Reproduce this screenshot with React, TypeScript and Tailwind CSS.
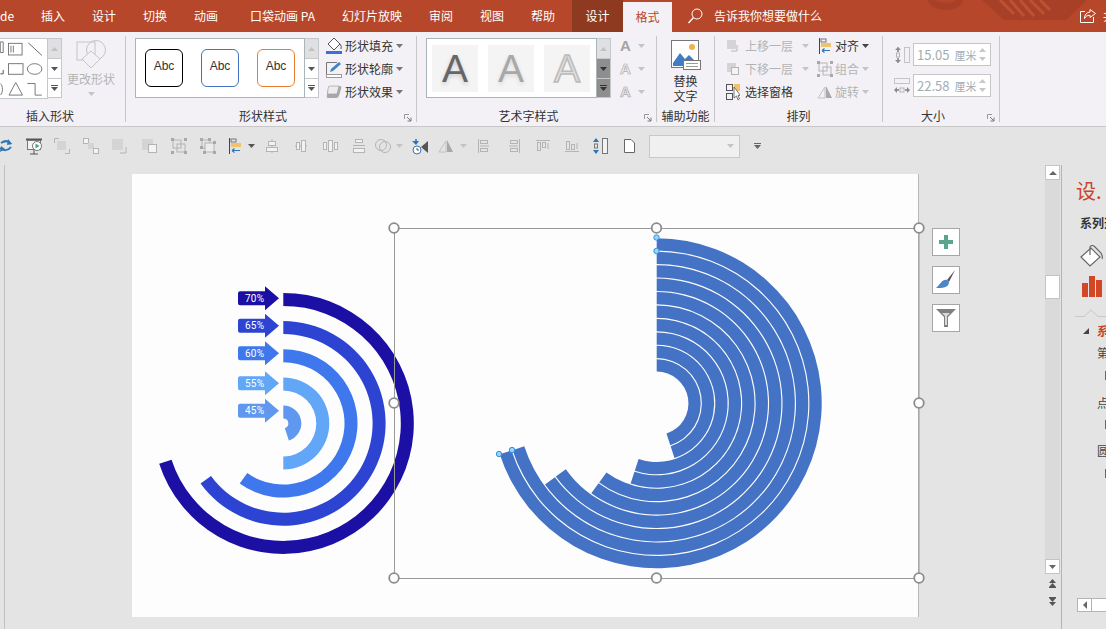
import React from 'react';

const TABS = ['插入', '设计', '切换', '动画', '口袋动画 PA', '幻灯片放映', '审阅', '视图', '帮助'];

const pt = (cx: number, cy: number, r: number, deg: number) => {
  const a = (deg * Math.PI) / 180;
  return `${(cx + r * Math.sin(a)).toFixed(2)} ${(cy - r * Math.cos(a)).toFixed(2)}`;
};

// ring segment running clockwise from 12 o'clock
const ring = (cx: number, cy: number, ro: number, ri: number, deg: number) => {
  const large = deg > 180 ? 1 : 0;
  return `M${pt(cx, cy, ro, 0)} A${ro} ${ro} 0 ${large} 1 ${pt(cx, cy, ro, deg)} L${pt(cx, cy, ri, deg)} A${ri} ${ri} 0 ${large} 0 ${pt(cx, cy, ri, 0)} Z`;
};

const LEFT_RINGS = [
  { ro: 130.5, ri: 117.5, deg: 252, color: '#1c10a4' },
  { ro: 102.3, ri: 89.3, deg: 234, color: '#2d44d2' },
  { ro: 74.2, ri: 61.2, deg: 216, color: '#3e78ec' },
  { ro: 46, ri: 33, deg: 180, color: '#62a6f8' },
  { ro: 18, ri: 5, deg: 162, color: '#5f98ee' },
];

const LABELS = [
  { y: 298.3, text: '70%', color: '#1c10a4' },
  { y: 325.7, text: '65%', color: '#2d44d2' },
  { y: 353.3, text: '60%', color: '#3e78ec' },
  { y: 383.3, text: '55%', color: '#62a6f8' },
  { y: 410.7, text: '45%', color: '#5f98ee' },
];

const RIGHT_DEGS = [252, 252, 234, 234, 216, 216, 198, 198, 162, 162];

const HANDLES = [
  [394, 228], [656.5, 228], [919, 228],
  [394, 403], [919, 403],
  [394, 578], [656.5, 578], [919, 578],
];

const Caret = ({ className = 'text-[#666]' }: { className?: string }) => (
  <svg width="7" height="4" viewBox="0 0 7 4" className={`shrink-0 ${className}`}>
    <path d="M0 0H7L3.5 4Z" fill="currentColor" />
  </svg>
);

const GalleryScroll = ({ dark = false }: { dark?: boolean }) => (
  <div className="flex w-[14px] shrink-0 flex-col">
    <div className={`flex h-[21px] items-center justify-center border border-l-0 border-[#c4c8ca] bg-[#e0dfe2]`}>
      <svg width="7" height="4" viewBox="0 0 7 4"><path d="M0 4H7L3.5 0Z" fill="#c2c2c2" /></svg>
    </div>
    <div className={`flex h-[19px] items-center justify-center border-r border-[#c4c8ca] ${dark ? 'bg-[#8e8e8e]' : 'bg-white'}`}>
      <Caret className={dark ? 'text-[#333]' : 'text-[#555]'} />
    </div>
    <div className={`flex h-[20px] flex-col items-center justify-center gap-[1px] border border-l-0 border-[#c4c8ca] ${dark ? 'bg-[#8e8e8e]' : 'bg-white'}`}>
      <div className={`h-px w-[7px] ${dark ? 'bg-[#333]' : 'bg-[#555]'}`} />
      <Caret className={dark ? 'text-[#333]' : 'text-[#555]'} />
    </div>
  </div>
);

const AbcBox = ({ className }: { className: string }) => (
  <div className={`flex h-[38px] w-[38px] items-center justify-center rounded-[6px] border bg-white pb-[4px] font-['Liberation_Sans',sans-serif] text-xs text-[#333] ${className}`}>
    Abc
  </div>
);

const Launcher = () => (
  <svg width="8" height="8" viewBox="0 0 8 8" className="absolute right-[4px] bottom-0">
    <path d="M0.5 5V0.5H5" fill="none" stroke="#999" />
    <path d="M3 3L7 7M7 3.5V7H3.5" fill="none" stroke="#777" />
  </svg>
);

const Group = ({ label, labelClass = '', launcher = false, className = '', children }: { label: string; labelClass?: string; launcher?: boolean; className?: string; children: React.ReactNode }) => (
  <div className={`flex h-[86px] shrink-0 flex-col border-r border-[#c6c6c6] ${className}`}>
    <div className="flex h-[70px]">{children}</div>
    <div className={`relative h-[16px] text-center text-xs leading-[20px] text-[#333] ${labelClass}`}>
      {label}
      {launcher && <Launcher />}
    </div>
  </div>
);

const GrayBox = ({ x, y, s = 8 }: { x: number; y: number; s?: number }) => <rect x={x} y={y} width={s} height={s} fill="#d4d4d4" />;

const Outline = ({ x, y, s = 8, c = '#b4b4b4' }: { x: number; y: number; s?: number; c?: string }) => (
  <rect x={x + 0.5} y={y + 0.5} width={s - 1} height={s - 1} fill="#f4f4f4" stroke={c} />
);

const Icon = ({ w = 16, h = 16, children }: { w?: number; h?: number; children: React.ReactNode }) => (
  <svg width={w} height={h} viewBox={`0 0 ${w} ${h}`} className="shrink-0">{children}</svg>
);

const AlignIcon = () => (
  <Icon w={12} h={16}>
    <path d="M0.5 0V16" stroke="#444" />
    <rect x="2" y="1" width="5" height="3" fill="none" stroke="#777" />
    <rect x="2" y="5" width="10" height="4" fill="#efc26b" />
    <path d="M3 12.5H11M3 12.5L5.5 10.5M3 12.5L5.5 14.5" fill="none" stroke="#2e75b6" strokeWidth="1.2" />
  </Icon>
);

const GroupIcon = () => (
  <Icon>
    <rect x="2" y="2" width="8" height="8" fill="none" stroke="#b4b4b4" />
    <rect x="6" y="6" width="8" height="8" fill="none" stroke="#b4b4b4" />
    {[[0, 0], [13, 0], [0, 13], [13, 13]].map(([x, y]) => <rect key={`${x}${y}`} x={x} y={y} width="3" height="3" fill="#a8a8a8" />)}
  </Icon>
);

const RotateIcon = () => (
  <Icon>
    <path d="M8 3V14H1Z" fill="none" stroke="#c0c0c0" />
    <path d="M9 2L15 14H9Z" fill="#a8a8a8" />
  </Icon>
);

const ToolSlot = ({ className, children }: { className: string; children: React.ReactNode }) => (
  <div className={`flex shrink-0 items-center justify-center ${className}`}>{children}</div>
);

const Spin = () => (
  <div className="flex flex-col gap-[5px]">
    <svg width="7" height="4" viewBox="0 0 7 4"><path d="M0 4H7L3.5 0Z" fill="#c8c8c8" /></svg>
    <Caret className="text-[#c8c8c8]" />
  </div>
);

const SizeInput = ({ value }: { value: string }) => (
  <div className="ml-[3px] flex h-[23px] w-[78px] items-center justify-between border border-[#c6c6c6] bg-white pr-[4px] pl-[3px] text-[#a3acb5]">
    <span className="text-[13px] whitespace-nowrap">{value}<span className="ml-[5px] text-[11px]">厘米</span></span>
    <Spin />
  </div>
);

const ChartButton = ({ children }: { children: React.ReactNode }) => (
  <div className="flex h-[28px] w-[28px] items-center justify-center border border-[#a6a6a6] bg-white">{children}</div>
);

export default function App() {
  return (
    <div className="flex h-[629px] w-[1106px] flex-col overflow-hidden bg-[#e4e4e4] font-['Noto_Sans_CJK_SC',sans-serif]">
      {/* title bar / tabs */}
      <div className="relative flex h-[32px] shrink-0 items-end overflow-hidden bg-[#b7472a] text-xs text-white">
        <svg width="1106" height="32" className="absolute top-0 left-0">
          <path d="M928 0A17.5 10 0 0 0 963 0H955A10 4 0 0 1 936 0Z" fill="#a84027" />
          <path d="M982 0L1004 20H1066L1087 0Z" fill="#a84027" />
          <path d="M1000 0L1014 14M1010 0L1024 16M1020 0L1034 16M1030 0L1044 14M1040 0L1050 10" stroke="#bd5233" strokeWidth="3" />
        </svg>
        <div className="relative flex h-[32px] w-[27.5px] shrink-0 items-center">de</div>
        {TABS.map((tab) => (
          <div key={tab} className={`relative flex h-[32px] shrink-0 items-center pr-[13.5px] whitespace-nowrap ${tab === '口袋动画 PA' ? 'pl-[18.5px]' : 'pl-[13.5px]'}`}>{tab}</div>
        ))}
        <div className="relative ml-[3.5px] flex h-[32px] w-[51px] shrink-0 items-center justify-center bg-[#8e3a21]">设计</div>
        <div className="relative flex h-[30px] w-[49px] shrink-0 items-center justify-center bg-[#f3f1f5] text-[#b7472a]">格式</div>
        <div className="relative flex h-[32px] shrink-0 items-center">
          <svg width="15" height="16" viewBox="0 0 15 16" className="ml-[16px]">
            <circle cx="9" cy="6" r="5" fill="none" stroke="#fff" />
            <path d="M5.5 9.5L0.5 15" stroke="#fff" strokeWidth="1.3" />
          </svg>
          <span className="ml-[11px] whitespace-nowrap">告诉我你想要做什么</span>
          <svg width="16" height="14" viewBox="0 0 16 14" className="ml-[258px] shrink-0">
            <path d="M5 2.5H0.5V13.5H13.5V8" fill="none" stroke="#fff" />
            <path d="M10 0.5L15.5 4.5L10 8.5V6.3C7 6.3 5.5 7.5 4.5 9.5C4.5 6 6.5 3.3 10 3Z" fill="none" stroke="#fff" />
          </svg>
          <span className="ml-[7px] whitespace-nowrap">共享</span>
        </div>
      </div>

      {/* ribbon */}
      <div className="flex h-[95px] shrink-0 border-b border-[#c8c8c8] bg-[#f3f1f5] pt-[4px]">
        <Group label="插入形状" labelClass="pr-[25px]" className="w-[126px]">
          <div className="mt-[2px] flex h-[60px]">
            <svg width="48" height="61" viewBox="0 30 48 61" className="border-y border-r border-[#c4c8ca] bg-white">
              <path d="M0 33V44H3V33Z" fill="none" stroke="#777" />
              <rect x="8.5" y="34.5" width="14" height="12" fill="none" stroke="#777" />
              <path d="M11 37V44M13.5 37V44" stroke="#777" />
              <path d="M29 34L43 47" stroke="#666" />
              <path d="M0 66H3V62" fill="none" stroke="#555" />
              <rect x="8.5" y="55.5" width="15" height="11" fill="none" stroke="#777" />
              <ellipse cx="35.5" cy="61" rx="7.5" ry="5.5" fill="none" stroke="#777" />
              <path d="M0 76C3 78 3 86 0 88" fill="none" stroke="#777" />
              <path d="M16 75L9 88H23Z" fill="none" stroke="#777" />
              <path d="M28 76H36V88H43" fill="none" stroke="#777" />
            </svg>
            <GalleryScroll />
          </div>
          <div className="ml-[5px] flex w-[48px] flex-col items-center">
            <svg width="30" height="30" viewBox="0 0 30 30" className="mt-[3px]">
              <rect x="1" y="3" width="18" height="18" fill="none" stroke="#c4c4c4" />
              <circle cx="20" cy="11" r="9.5" fill="none" stroke="#c4c4c4" />
              <path d="M15 12L24 20L15 29L6 20Z" fill="#f3f1f5" stroke="#c4c4c4" />
            </svg>
            <span className="mt-[2px] whitespace-nowrap text-xs leading-[16px] text-[#b4b4b4]">更改形状</span>
            <Caret className="mt-[5px] text-[#c4c4c4]" />
          </div>
        </Group>

        <Group label="形状样式" labelClass="pr-4" launcher className="w-[291px]">
          <div className="mt-[2px] ml-[9px] flex h-[60px]">
            <div className="flex w-[170px] items-center gap-[18px] border border-[#aab5b8] bg-white pl-[9px]">
              <AbcBox className="border-black" />
              <AbcBox className="border-[#4472c4]" />
              <AbcBox className="border-[#ed7d31]" />
            </div>
            <GalleryScroll />
          </div>
          <div className="ml-[7px] flex flex-col gap-[3px] text-xs text-[#333]">
            <div className="flex h-[20px] items-center">
              <Icon h={18}>
                <path d="M2 7L8 1L14 7L8 13Z" fill="#fff" stroke="#555" />
                <path d="M14 7Q16 9 15 12" fill="none" stroke="#555" />
                <rect y="14" width="16" height="3" fill="#3e6fd8" />
              </Icon>
              <span className="ml-[3px]">形状填充</span>
              <Caret className="ml-[3px] text-[#777]" />
            </div>
            <div className="flex h-[20px] items-center">
              <Icon h={17}>
                <path d="M11 1.5H0.5V13" fill="none" stroke="#777" />
                <path d="M13 1L15 3L7 10L4 11L5 8Z" fill="#3f86c8" />
                <rect x="0.5" y="13.5" width="15" height="3" fill="#fff" stroke="#999" />
              </Icon>
              <span className="ml-[3px]">形状轮廓</span>
              <Caret className="ml-[3px] text-[#777]" />
            </div>
            <div className="flex h-[20px] items-center">
              <Icon h={14}>
                <path d="M4 1H14Q16 1 15 4L13 11Q12 13 10 13H2Q0 13 1 10L2 4Q2 1 4 1Z" fill="#a8a8a8" />
                <path d="M4 1H13L11 9H1.5L2 4Q2 1 4 1Z" fill="#ececec" stroke="#999" strokeWidth="0.6" />
              </Icon>
              <span className="ml-[3px]">形状效果</span>
              <Caret className="ml-[3px] text-[#777]" />
            </div>
          </div>
        </Group>

        <Group label="艺术字样式" labelClass="pr-4" launcher className="w-[240px]">
          <div className="mt-[2px] ml-[9px] flex h-[60px]">
            <div className="flex w-[171px] items-center gap-[10px] border border-[#aab5b8] bg-white pl-[5px] font-['Liberation_Sans',sans-serif] text-[39px]">
              <div className="flex h-[47px] w-[46px] items-center justify-center bg-[#f4f4f4] pt-[2px] text-[#666] [text-shadow:0_2px_4px_#c8c8c8]">A</div>
              <div className="flex h-[47px] w-[46px] items-center justify-center bg-[#f4f4f4] pt-[2px] text-[#a8a8a8] [text-shadow:0_2px_4px_#d8d8d8]">A</div>
              <div className="flex h-[47px] w-[46px] items-center justify-center bg-[#f4f4f4] pt-[2px] text-[#dedede] [-webkit-text-stroke:1.5px_#bbb]">A</div>
            </div>
            <GalleryScroll dark />
          </div>
          <div className="ml-[9px] flex flex-col gap-[3px] font-['Liberation_Sans',sans-serif] text-[15px]">
            <div className="flex h-[20px] items-center font-bold text-[#a4a4a4]">A<Caret className="ml-[7px] text-[#c4c4c4]" /></div>
            <div className="flex h-[20px] items-center font-bold text-[#f3f1f5] [-webkit-text-stroke:0.7px_#aaa]">A<Caret className="ml-[7px] text-[#c4c4c4]" /></div>
            <div className="flex h-[20px] items-center font-bold text-[#e8e8e8] [-webkit-text-stroke:0.7px_#aaa]">A<Caret className="ml-[7px] text-[#c4c4c4]" /></div>
          </div>
        </Group>

        <Group label="辅助功能" className="w-[58px]">
          <div className="flex w-full flex-col items-center text-xs leading-[15px] text-[#333]">
            <svg width="30" height="30" viewBox="0 0 30 30" className="mt-[4px]">
              <rect x="0.5" y="0.5" width="27" height="27" fill="#fff" stroke="#777" />
              <circle cx="21" cy="7" r="3" fill="#efb04e" />
              <path d="M2 23L9 13L14 19L18 15L26 23V26H2Z" fill="#3f7cc4" />
              <rect x="12.5" y="20.5" width="17" height="9" fill="#fff" stroke="#777" />
              <path d="M15 23.5H27M15 26.5H27" stroke="#999" />
            </svg>
            <span className="mt-[3px]">替换</span>
            <span>文字</span>
          </div>
        </Group>

        <Group label="排列" className="w-[168px]">
          <div className="flex pl-[11px] text-xs">
            <div className="flex w-[84px] flex-col gap-[3px]">
              <div className="flex h-[20px] items-center text-[#b4b4b4]">
                <Icon w={14}><GrayBox x={1} y={2} s={9} /><path d="M11 7V13H5" fill="none" stroke="#b4b4b4" /></Icon>
                <span className="ml-[5px]">上移一层</span>
                <Caret className="ml-[9px] text-[#c4c4c4]" />
              </div>
              <div className="flex h-[20px] items-center text-[#b4b4b4]">
                <Icon w={14}><GrayBox x={1} y={2} s={9} /><Outline x={5} y={6} /></Icon>
                <span className="ml-[5px]">下移一层</span>
                <Caret className="ml-[9px] text-[#c4c4c4]" />
              </div>
              <div className="flex h-[20px] items-center text-[#333]">
                <Icon w={14} h={18}>
                  <rect x="0.5" y="1.5" width="6" height="6" fill="none" stroke="#555" />
                  <rect x="0.5" y="10.5" width="6" height="6" fill="none" stroke="#555" />
                  <rect x="8" y="1" width="6" height="7" fill="#efc26b" />
                  <path d="M8 4V15L10.5 13L12 17L13.5 16L12 12.5H14.5Z" fill="#fff" stroke="#555" strokeWidth="0.8" />
                </Icon>
                <span className="ml-[5px]">选择窗格</span>
              </div>
            </div>
            <div className="ml-[9px] flex flex-col gap-[3px]">
              <div className="flex h-[20px] items-center text-[#333]">
                <div className="w-[16px]"><AlignIcon /></div>
                <span>对齐</span>
                <Caret className="ml-[3px] text-[#444]" />
              </div>
              <div className="flex h-[20px] items-center text-[#b4b4b4]">
                <div className="-ml-[2px] w-[18px]"><GroupIcon /></div>
                <span>组合</span>
                <Caret className="ml-[3px] text-[#c4c4c4]" />
              </div>
              <div className="flex h-[20px] items-center text-[#b4b4b4]">
                <div className="-ml-[2px] w-[18px]"><RotateIcon /></div>
                <span>旋转</span>
                <Caret className="ml-[3px] text-[#c4c4c4]" />
              </div>
            </div>
          </div>
        </Group>

        <Group label="大小" labelClass="pr-4" launcher className="w-[117px]">
          <div className="mt-[7px] flex flex-col gap-[8px] pl-[11px]">
            <div className="flex items-center">
              <Icon>
                <rect x="10.5" y="0.5" width="5" height="15" fill="none" stroke="#c4c4c4" />
                <path d="M4 5V0.5M4 11V15.5" stroke="#9a9a9a" strokeWidth="2" />
                <path d="M1 3L4 0L7 3ZM1 13L4 16L7 13Z" fill="#8a8a8a" />
                <rect x="2.5" y="6" width="3" height="4" fill="none" stroke="#b4b4b4" />
              </Icon>
              <SizeInput value="15.05" />
            </div>
            <div className="flex items-center">
              <Icon>
                <rect x="0.5" y="0.5" width="15" height="5" fill="none" stroke="#c4c4c4" />
                <path d="M1 12H5M11 12H15" stroke="#9a9a9a" strokeWidth="2" />
                <path d="M3 9L0 12L3 15ZM13 9L16 12L13 15Z" fill="#8a8a8a" />
                <rect x="6" y="10" width="4" height="4" fill="none" stroke="#b4b4b4" />
              </Icon>
              <SizeInput value="22.58" />
            </div>
          </div>
        </Group>
      </div>

      {/* quick toolbar */}
      <div className="flex h-[38px] shrink-0 items-center bg-[#e4e4e4]">
        <ToolSlot className="w-[20px] justify-start">
          <Icon w={12} h={14}>
            <path d="M0 9C3 12 8 12 11 8M11 5C8 1 4 2 1 4" fill="none" stroke="#2e75b6" strokeWidth="2" />
            <path d="M8 0L12 5L7 6ZM0 13L1 7L5 10Z" fill="#2e75b6" />
          </Icon>
        </ToolSlot>
        <ToolSlot className="w-[28px]">
          <Icon h={17}>
            <path d="M0 1.5H16" stroke="#555" strokeWidth="2" />
            <rect x="1.5" y="2.5" width="13" height="9" fill="#f4f4f4" stroke="#777" />
            <path d="M8 11V16M4 16H12" stroke="#555" />
            <circle cx="11" cy="8" r="4.5" fill="#fff" stroke="#777" />
            <path d="M9.5 5.5V10.5L13.5 8Z" fill="#52a27c" />
          </Icon>
        </ToolSlot>
        <ToolSlot className="w-[28px]">
          <Icon><path d="M5 0.5H0.5V5" fill="none" stroke="#b4b4b4" /><GrayBox x={3} y={3} s={9} /><path d="M11 15.5H15.5V11" fill="none" stroke="#b4b4b4" /></Icon>
        </ToolSlot>
        <ToolSlot className="w-[29px]">
          <Icon><Outline x={0} y={0} s={6} /><GrayBox x={5} y={5} s={6} /><Outline x={10} y={10} s={6} /></Icon>
        </ToolSlot>
        <ToolSlot className="w-[30px]">
          <Icon><GrayBox x={0} y={1} s={11} /><path d="M14 9V15H8" fill="none" stroke="#b4b4b4" /></Icon>
        </ToolSlot>
        <ToolSlot className="w-[29px]">
          <Icon><GrayBox x={0} y={1} s={11} /><Outline x={6} y={6} s={9} /></Icon>
        </ToolSlot>
        <ToolSlot className="w-[29px]"><GroupIcon /></ToolSlot>
        <ToolSlot className="w-[29px]">
          <Icon>
            <rect x="2" y="2" width="8" height="8" fill="none" stroke="#b4b4b4" />
            <rect x="5" y="5" width="9" height="9" fill="#ececec" stroke="#b4b4b4" />
            {[[0, 0], [8, 0], [0, 8], [13, 3], [3, 13], [13, 13]].map(([x, y]) => <rect key={`${x}${y}`} x={x} y={y} width="3" height="3" fill="#a8a8a8" />)}
          </Icon>
        </ToolSlot>
        <ToolSlot className="w-[26px]"><AlignIcon /></ToolSlot>
        <ToolSlot className="w-[6px]"><Caret className="text-[#555]" /></ToolSlot>
        <ToolSlot className="ml-[4px] w-[28px]">
          <Icon w={12} h={14}><path d="M6 0V14" stroke="#b4b4b4" /><rect x="2.5" y="2.5" width="7" height="4" fill="#f2f2f2" stroke="#b4b4b4" /><rect x="0.5" y="8.5" width="11" height="4" fill="#f2f2f2" stroke="#b4b4b4" /></Icon>
        </ToolSlot>
        <ToolSlot className="w-[30px]">
          <Icon w={12} h={12}><path d="M0 6H12" stroke="#b4b4b4" /><rect x="1.5" y="2.5" width="3" height="7" fill="#f2f2f2" stroke="#b4b4b4" /><rect x="6.5" y="0.5" width="4" height="11" fill="#f2f2f2" stroke="#b4b4b4" /></Icon>
        </ToolSlot>
        <ToolSlot className="w-[28px]">
          <Icon w={15} h={12}><rect x="0.5" y="2.5" width="3" height="7" fill="#f2f2f2" stroke="#b4b4b4" /><rect x="5.5" y="0.5" width="4" height="11" fill="#f2f2f2" stroke="#b4b4b4" /><rect x="11.5" y="2.5" width="3" height="7" fill="#f2f2f2" stroke="#b4b4b4" /></Icon>
        </ToolSlot>
        <ToolSlot className="w-[30px]">
          <Icon w={12} h={14}><rect x="2.5" y="0.5" width="7" height="3" fill="#f2f2f2" stroke="#b4b4b4" /><path d="M0 6.5H12" stroke="#b4b4b4" /><rect x="0.5" y="9.5" width="11" height="4" fill="#f2f2f2" stroke="#b4b4b4" /></Icon>
        </ToolSlot>
        <ToolSlot className="w-[18px]">
          <Icon><circle cx="6" cy="7" r="5.5" fill="none" stroke="#b4b4b4" /><circle cx="10" cy="9" r="5.5" fill="none" stroke="#b4b4b4" /></Icon>
        </ToolSlot>
        <ToolSlot className="w-[14px]"><Caret className="text-[#c4c4c4]" /></ToolSlot>
        <ToolSlot className="w-[28px]">
          <Icon w={17} h={17}>
            <path d="M4 1V6" stroke="#2e75b6" strokeWidth="1.5" />
            <path d="M0 3L4 7L7 3Z" fill="#2e75b6" />
            <circle cx="5" cy="12" r="4" fill="#fff" stroke="#2e75b6" />
            <path d="M5 10V12H7" fill="none" stroke="#555" />
            <path d="M16 3V15L9 9Z" fill="#555" />
          </Icon>
        </ToolSlot>
        <ToolSlot className="w-[24px]"><RotateIcon /></ToolSlot>
        <ToolSlot className="w-[10px]"><Caret className="text-[#c4c4c4]" /></ToolSlot>
        <ToolSlot className="ml-[2px] w-[28px]">
          <Icon w={12} h={14}><path d="M0.5 0V14" stroke="#b4b4b4" /><rect x="2.5" y="1.5" width="7" height="3" fill="none" stroke="#b4b4b4" /><rect x="2.5" y="9.5" width="7" height="3" fill="none" stroke="#b4b4b4" /><path d="M2 7H11" stroke="#b4b4b4" /></Icon>
        </ToolSlot>
        <ToolSlot className="w-[32px]">
          <Icon w={12} h={14}><path d="M11.5 0V14" stroke="#b4b4b4" /><rect x="2.5" y="1.5" width="7" height="3" fill="none" stroke="#b4b4b4" /><rect x="2.5" y="9.5" width="7" height="3" fill="none" stroke="#b4b4b4" /><path d="M1 7H10" stroke="#b4b4b4" /></Icon>
        </ToolSlot>
        <ToolSlot className="w-[26px]">
          <Icon w={14} h={12}><path d="M0 0.5H14" stroke="#b4b4b4" /><rect x="1.5" y="2.5" width="3" height="8" fill="none" stroke="#b4b4b4" /><rect x="6.5" y="2.5" width="3" height="5" fill="none" stroke="#b4b4b4" /><path d="M12 9V3" stroke="#b4b4b4" /></Icon>
        </ToolSlot>
        <ToolSlot className="w-[32px]">
          <Icon w={14} h={12}><path d="M0 11.5H14" stroke="#b4b4b4" /><rect x="1.5" y="1.5" width="3" height="8" fill="none" stroke="#b4b4b4" /><rect x="6.5" y="4.5" width="3" height="5" fill="none" stroke="#b4b4b4" /><path d="M12 3V9" stroke="#b4b4b4" /></Icon>
        </ToolSlot>
        <ToolSlot className="w-[24px]">
          <Icon h={16}>
            <rect x="10.5" y="0.5" width="5" height="15" fill="#f2f2f2" stroke="#777" />
            <path d="M4 4V1M4 12V15" stroke="#2e75b6" strokeWidth="2" />
            <path d="M1 4L4 0L7 4ZM1 12L4 16L7 12Z" fill="#2e75b6" />
            <rect x="2.5" y="6" width="3" height="4" fill="none" stroke="#777" />
          </Icon>
        </ToolSlot>
        <ToolSlot className="w-[34px]">
          <Icon w={11} h={14}><path d="M0.5 0.5H7L10.5 4V13.5H0.5Z" fill="#fff" stroke="#666" /></Icon>
        </ToolSlot>
        <div className="ml-[3px] flex h-[23px] w-[91px] items-center justify-end border border-[#c8c8c8] bg-[#f0f0f0] pr-[5px]"><Caret className="text-[#c4c4c4]" /></div>
        <div className="ml-[14px] flex flex-col gap-[1px]">
          <div className="h-px w-[7px] bg-[#666]" />
          <Caret className="text-[#666]" />
        </div>
      </div>

      {/* editing area */}
      <div className="flex h-[464px] shrink-0">
        <div className="h-full w-[5px] shrink-0 border-r border-[#c0c0c0]" />
        <div className="flex min-w-0 flex-1 pt-[9px] pl-[127px]">
          <div className="relative h-[443px] w-[787px] shrink-0 border-r border-[#b8b8b8] bg-[#fdfdfd]">
            <svg viewBox="132 174 787 443" className="absolute inset-0 h-[443px] w-[787px] overflow-visible">
              {LEFT_RINGS.map((r) => (
                <path key={r.ro} d={ring(283.3, 423.4, r.ro, r.ri, r.deg)} fill={r.color} />
              ))}
              {LABELS.map((l) => (
                <g key={l.text}>
                  <path
                    d={`M240 ${l.y - 7}H265V${l.y - 12}L279 ${l.y}L265 ${l.y + 12}V${l.y + 7}H240Q238 ${l.y + 7} 238 ${l.y + 5}V${l.y - 5}Q238 ${l.y - 7} 240 ${l.y - 7}Z`}
                    fill={l.color}
                  />
                  <text x="245" y={l.y + 3.5} fontSize="10" letterSpacing="0.2" fill="#fff" fontFamily="Roboto, sans-serif">{l.text}</text>
                </g>
              ))}
              {RIGHT_DEGS.map((deg, i) => {
                const ro = 165 - i * 13.44;
                return <path key={ro} d={ring(656.7, 403.3, ro, ro - 12.3, deg)} fill="#4472c4" />;
              })}
              <rect x="394.5" y="228.5" width="524.5" height="350" fill="none" stroke="#999" />
              {HANDLES.map(([x, y]) => (
                <circle key={`${x}-${y}`} cx={x} cy={y} r="4.8" fill="#fdfdfd" stroke="#8c8c8c" strokeWidth="1.8" />
              ))}
              {[[656.5, 237.5], [656.5, 251], [512, 450], [499, 454]].map(([x, y]) => (
                <circle key={`${x}-${y}`} cx={x} cy={y} r="2.7" fill="#9fd0f5" stroke="#2a96e0" />
              ))}
            </svg>
          </div>
          <div className="mt-[54px] ml-[13px] flex shrink-0 flex-col gap-[10px]">
            <ChartButton>
              <svg width="14" height="14" viewBox="0 0 14 14"><path d="M5 0H9V5H14V9H9V14H5V9H0V5H5Z" fill="#5ba58b" /></svg>
            </ChartButton>
            <ChartButton>
              <svg width="20" height="20" viewBox="0 0 20 20">
                <path d="M19 0L11 10L13 12Z" fill="#555" />
                <path d="M11 10C6 9 5 14 0 18C6 18 13 18 13 12Z" fill="#4a86c8" />
              </svg>
            </ChartButton>
            <ChartButton>
              <svg width="20" height="18" viewBox="0 0 20 18">
                <path d="M0 0H20L12 8V18H8V8Z" fill="#7f7f7f" />
                <path d="M6 4H14L11 7V16H9V7Z" fill="#d9d9d9" />
              </svg>
            </ChartButton>
          </div>
        </div>

        {/* vertical scrollbar */}
        <div className="flex w-[15px] shrink-0 flex-col items-center">
          <div className="flex h-[15px] w-full items-center justify-center border border-[#c4c4c4] bg-white">
            <svg width="8" height="4" viewBox="0 0 8 4"><path d="M0 4H8L4 0Z" fill="#666" /></svg>
          </div>
          <div className="h-[379px] w-full bg-[#dadada] pt-[95px]">
            <div className="h-[24px] w-full border border-[#c4c4c4] bg-white" />
          </div>
          <div className="flex h-[15px] w-full items-center justify-center border border-[#c4c4c4] bg-white">
            <Caret className="text-[#666]" />
          </div>
          <div className="mt-[5px] flex flex-col items-center gap-[9px]">
            <div className="flex flex-col items-center">
              <svg width="7" height="4" viewBox="0 0 7 4"><path d="M0 4H7L3.5 0Z" fill="#555" /></svg>
              <svg width="7" height="4" viewBox="0 0 7 4"><path d="M0 4H7L3.5 0Z" fill="#555" /></svg>
              <div className="h-px w-[7px] bg-[#555]" />
            </div>
            <div className="flex flex-col items-center">
              <div className="h-px w-[7px] bg-[#555]" />
              <Caret className="text-[#555]" />
              <Caret className="text-[#555]" />
            </div>
          </div>
        </div>

        {/* format pane, cut off by the window */}
        <div className="ml-px flex w-[45px] shrink-0 flex-col overflow-hidden border-l border-[#b4b4b4] text-xs leading-[16px] text-[#444]">
          <div className="mt-[12px] pl-[14px] text-[20px] leading-[28px] whitespace-nowrap text-[#c8452b]">设.</div>
          <div className="mt-[10px] pl-[18px] font-bold whitespace-nowrap text-[#333]">系列选项</div>
          <svg width="24" height="22" viewBox="0 0 24 22" className="mt-[14px] ml-[18px] shrink-0">
            <path d="M1 12L11 3L20 12L10 21Z" fill="#fff" stroke="#666" strokeWidth="1.2" />
            <path d="M10 10V2Q12 -1 15 2L21 8Q23 12 22 14" fill="none" stroke="#666" strokeWidth="1.2" />
          </svg>
          <div className="mt-[9px] ml-[20px] flex h-[21px] shrink-0 items-end gap-px">
            <div className="h-[14px] w-[6px] bg-[#d24726]" />
            <div className="h-[21px] w-[6px] bg-[#d24726]" />
            <div className="h-[17px] w-[6px] bg-[#d24726]" />
          </div>
          <svg width="31" height="8" viewBox="0 0 31 8" className="mt-[12px] ml-[13px] shrink-0">
            <path d="M0 7.5H9L16 1L23 7.5H31" fill="none" stroke="#c8c8c8" />
          </svg>
          <div className="mt-[6px] flex h-[16px] shrink-0 items-center pl-[21px]">
            <svg width="6" height="6" viewBox="0 0 6 6" className="shrink-0"><path d="M6 0V6H0Z" fill="#444" /></svg>
            <span className="ml-[8px] font-bold whitespace-nowrap text-[#c8452b]">系列选项</span>
          </div>
          <div className="mt-[6px] h-[16px] shrink-0 pl-[35px] whitespace-nowrap">第一扇区</div>
          <div className="mt-[10px] ml-[43px] h-[9px] w-px shrink-0 bg-[#666]" />
          <div className="mt-[15px] h-[16px] shrink-0 pl-[35px] whitespace-nowrap">点爆炸</div>
          <div className="mt-[9px] ml-[43px] h-[9px] w-px shrink-0 bg-[#666]" />
          <div className="mt-[14px] h-[16px] shrink-0 pl-[35px] whitespace-nowrap">圆环</div>
          <div className="mt-[10px] ml-[43px] h-[9px] w-px shrink-0 bg-[#666]" />
          <div className="mt-auto mb-[17px] flex h-[14px] shrink-0 pl-[15px]">
            <div className="flex w-[15px] shrink-0 items-center justify-center border border-[#b4b4b4] bg-white">
              <svg width="4" height="8" viewBox="0 0 4 8"><path d="M4 0V8L0 4Z" fill="#666" /></svg>
            </div>
            <div className="w-[20px] shrink-0 border-y border-[#b4b4b4] bg-white" />
          </div>
        </div>
      </div>
    </div>
  );
}
